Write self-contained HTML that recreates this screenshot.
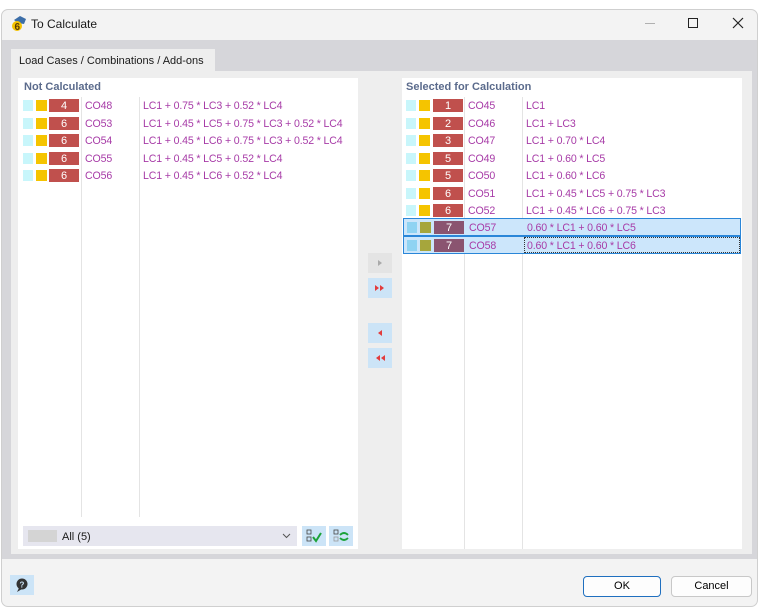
<!DOCTYPE html>
<html><head><meta charset="utf-8"><style>
*{margin:0;padding:0;box-sizing:border-box}
body{width:760px;height:616px;background:#fff;font-family:"Liberation Sans",sans-serif;font-size:11px;position:relative;overflow:hidden}
.a{position:absolute}
.win{left:1px;top:9px;width:757px;height:598px;border:1px solid #cfcfcf;border-radius:7px;background:#f3f3f3;overflow:hidden}
.row{position:absolute;height:17px;left:0;right:0}
.c{position:absolute;top:3px;width:10px;height:11px;background:#c8f6fb}
.y{position:absolute;top:3px;width:11px;height:11px;background:#f5c400}
.b{position:absolute;top:2px;width:30px;height:13px;background:#c0504d;color:#fff;text-align:center;font-size:11px;line-height:14px}
.t{position:absolute;top:3px;color:#a73ba7;font-size:10.6px;letter-spacing:-0.15px;white-space:nowrap}
.sel{background:#cce6fb;border:1px solid #2a86d8}
.sel .c{background:#8fd3f2}.sel .y{background:#a6a63c}.sel .b{background:#8a5470}
.vl{position:absolute;width:1px;background:#e4e4e4}
.btn{position:absolute;width:24px;height:20px;background:#cce4f7}
.hdr{position:absolute;color:#5b6b8c;font-weight:bold;font-size:11px}
</style></head><body>
<div class="a win">
 <div class="a" style="left:8px;top:5px;width:18px;height:18px">
  <svg width="18" height="18" viewBox="0 0 18 18"><path d="M4 5 L10 1 L16 4 L14 9 L8 8Z" fill="#3c6ea8"/><circle cx="7" cy="11" r="5" fill="#f4c300"/><text x="4.5" y="15" font-size="10" font-weight="bold" fill="#5a3a00" font-family="Liberation Sans">6</text></svg>
 </div>
 <div class="a" style="left:29px;top:7px;font-size:12px;color:#1a1a1a">To Calculate</div>
 <div class="a" style="left:643px;top:13px;width:10px;height:1px;background:#b0b0b0"></div>
 <div class="a" style="left:686px;top:8px;width:10px;height:10px;border:1.3px solid #222"></div>
 <svg class="a" style="left:730px;top:7px" width="12" height="12"><path d="M1 1L11 11M11 1L1 11" stroke="#222" stroke-width="1.2"/></svg>
 <div class="a" style="left:0;top:30px;width:757px;height:519px;background:#d6d6da"></div>
 <div class="a" style="left:9px;top:39px;width:204px;height:22px;background:#eeeeee;font-size:11px;padding:6px 0 0 8px;color:#1a1a1a">Load Cases / Combinations / Add-ons</div>
 <div class="a" style="left:9px;top:61px;width:741px;height:483px;background:#eeeeee"></div>
</div>
<!-- left list -->
<div class="a" style="left:18px;top:78px;width:340px;height:471px;background:#fff">
 <div class="hdr" style="left:6px;top:3px">Not Calculated</div>
 <div class="vl" style="left:63px;top:19px;height:420px"></div>
 <div class="vl" style="left:121px;top:19px;height:420px"></div>
 <div class="row" style="top:19px"><div class="c" style="left:5px"></div><div class="y" style="left:18px"></div><div class="b" style="left:31px">4</div><div class="t" style="left:67px">CO48</div><div class="t" style="left:125px">LC1 + 0.75 * LC3 + 0.52 * LC4</div></div>
 <div class="row" style="top:36.5px"><div class="c" style="left:5px"></div><div class="y" style="left:18px"></div><div class="b" style="left:31px">6</div><div class="t" style="left:67px">CO53</div><div class="t" style="left:125px">LC1 + 0.45 * LC5 + 0.75 * LC3 + 0.52 * LC4</div></div>
 <div class="row" style="top:54px"><div class="c" style="left:5px"></div><div class="y" style="left:18px"></div><div class="b" style="left:31px">6</div><div class="t" style="left:67px">CO54</div><div class="t" style="left:125px">LC1 + 0.45 * LC6 + 0.75 * LC3 + 0.52 * LC4</div></div>
 <div class="row" style="top:71.5px"><div class="c" style="left:5px"></div><div class="y" style="left:18px"></div><div class="b" style="left:31px">6</div><div class="t" style="left:67px">CO55</div><div class="t" style="left:125px">LC1 + 0.45 * LC5 + 0.52 * LC4</div></div>
 <div class="row" style="top:89px"><div class="c" style="left:5px"></div><div class="y" style="left:18px"></div><div class="b" style="left:31px">6</div><div class="t" style="left:67px">CO56</div><div class="t" style="left:125px">LC1 + 0.45 * LC6 + 0.52 * LC4</div></div>
 <div class="a" style="left:5px;top:448px;width:274px;height:20px;background:#e6e6ef"></div>
 <div class="a" style="left:10px;top:452px;width:29px;height:12px;background:#d4d4d4"></div>
 <div class="a" style="left:44px;top:453px;font-size:11px;color:#1a1a1a">All (5)</div>
 <svg class="a" style="left:264px;top:455px" width="9" height="6"><path d="M1 1L4.5 4.5L8 1" stroke="#555" fill="none"/></svg>
 <div class="btn" style="left:284px;top:448px"><svg width="24" height="20"><rect x="5" y="4" width="4" height="4" fill="none" stroke="#444" stroke-width=".8"/><rect x="5" y="11" width="4" height="4" fill="none" stroke="#444" stroke-width=".8"/><path d="M11 11L14 15L19 7" stroke="#1ca33a" stroke-width="2" fill="none"/></svg></div>
 <div class="btn" style="left:311px;top:448px"><svg width="24" height="20"><rect x="5" y="4" width="4" height="4" fill="none" stroke="#444" stroke-width=".8"/><rect x="5" y="11" width="4" height="4" fill="none" stroke="#999" stroke-width=".8"/><path d="M11 9Q15 5 19 9M19 12Q15 16 11 12" stroke="#1ca33a" stroke-width="1.8" fill="none"/></svg></div>
</div>
<!-- middle buttons -->
<div class="a" style="left:368px;top:253px;width:24px;height:20px;background:#e4e4e4"><svg width="24" height="20"><path d="M10 7L14 10L10 13Z" fill="#aaa"/></svg></div>
<div class="btn" style="left:368px;top:278px"><svg width="24" height="20"><path d="M7 7L11 10L7 13ZM12 7L16 10L12 13Z" fill="#e23c3c"/></svg></div>
<div class="btn" style="left:368px;top:323px"><svg width="24" height="20"><path d="M14 7L10 10L14 13Z" fill="#e23c3c"/></svg></div>
<div class="btn" style="left:368px;top:348px"><svg width="24" height="20"><path d="M12 7L8 10L12 13ZM17 7L13 10L17 13Z" fill="#e23c3c"/></svg></div>
<!-- right list -->
<div class="a" style="left:402px;top:78px;width:340px;height:471px;background:#fff">
 <div class="hdr" style="left:4px;top:3px">Selected for Calculation</div>
 <div class="vl" style="left:62px;top:19px;height:452px"></div>
 <div class="vl" style="left:120px;top:19px;height:452px"></div>
 <div class="row" style="top:19px"><div class="c" style="left:4px"></div><div class="y" style="left:17px"></div><div class="b" style="left:31px">1</div><div class="t" style="left:66px">CO45</div><div class="t" style="left:124px">LC1</div></div>
 <div class="row" style="top:36.5px"><div class="c" style="left:4px"></div><div class="y" style="left:17px"></div><div class="b" style="left:31px">2</div><div class="t" style="left:66px">CO46</div><div class="t" style="left:124px">LC1 + LC3</div></div>
 <div class="row" style="top:54px"><div class="c" style="left:4px"></div><div class="y" style="left:17px"></div><div class="b" style="left:31px">3</div><div class="t" style="left:66px">CO47</div><div class="t" style="left:124px">LC1 + 0.70 * LC4</div></div>
 <div class="row" style="top:71.5px"><div class="c" style="left:4px"></div><div class="y" style="left:17px"></div><div class="b" style="left:31px">5</div><div class="t" style="left:66px">CO49</div><div class="t" style="left:124px">LC1 + 0.60 * LC5</div></div>
 <div class="row" style="top:89px"><div class="c" style="left:4px"></div><div class="y" style="left:17px"></div><div class="b" style="left:31px">5</div><div class="t" style="left:66px">CO50</div><div class="t" style="left:124px">LC1 + 0.60 * LC6</div></div>
 <div class="row" style="top:106.5px"><div class="c" style="left:4px"></div><div class="y" style="left:17px"></div><div class="b" style="left:31px">6</div><div class="t" style="left:66px">CO51</div><div class="t" style="left:124px">LC1 + 0.45 * LC5 + 0.75 * LC3</div></div>
 <div class="row" style="top:124px"><div class="c" style="left:4px"></div><div class="y" style="left:17px"></div><div class="b" style="left:31px">6</div><div class="t" style="left:66px">CO52</div><div class="t" style="left:124px">LC1 + 0.45 * LC6 + 0.75 * LC3</div></div>
 <div class="row sel" style="top:140px;left:1px;right:1px;height:18px"><div class="c" style="left:3px"></div><div class="y" style="left:16px"></div><div class="b" style="left:30px">7</div><div class="t" style="left:65px">CO57</div><div class="t" style="left:123px">0.60 * LC1 + 0.60 * LC5</div></div>
 <div class="row sel" style="top:158px;left:1px;right:1px;height:18px"><div class="c" style="left:3px"></div><div class="y" style="left:16px"></div><div class="b" style="left:30px">7</div><div class="t" style="left:65px">CO58</div><div class="a" style="left:120px;top:0;width:216px;height:16px;border:1px dotted #333"></div><div class="t" style="left:123px">0.60 * LC1 + 0.60 * LC6</div></div>
</div>
<!-- footer -->
<div class="btn" style="left:10px;top:575px;width:24px;height:20px"><svg width="24" height="20"><circle cx="12" cy="9" r="5.5" fill="#333"/><path d="M9 13L7 17L12 14Z" fill="#333"/><text x="9.5" y="12.5" font-size="8" fill="#cce4f7" font-weight="bold" font-family="Liberation Sans">?</text></svg></div>
<div class="a" style="left:583px;top:576px;width:78px;height:21px;border:1px solid #1f6fbf;border-radius:4px;background:#fdfdfd;text-align:center;line-height:19px;font-size:11px">OK</div>
<div class="a" style="left:671px;top:576px;width:81px;height:21px;border:1px solid #c8c8c8;border-radius:4px;background:#fdfdfd;text-align:center;line-height:19px;font-size:11px">Cancel</div>
</body></html>
